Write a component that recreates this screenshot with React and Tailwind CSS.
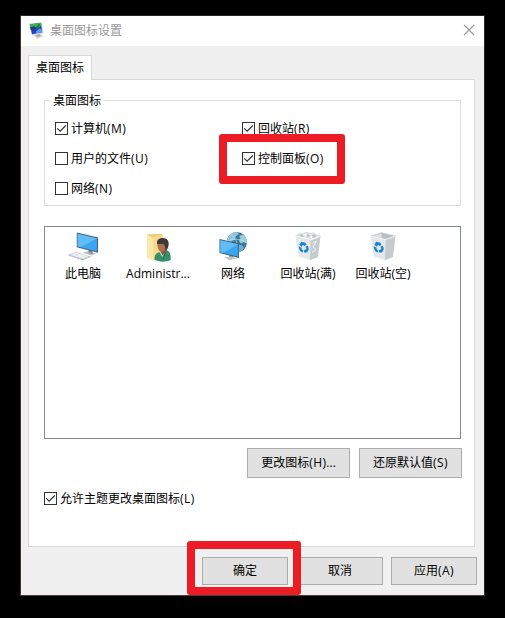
import React from 'react';

function AppIcon() {
  return (
    <svg width="16" height="18" viewBox="0 0 16 18" className="shrink-0">
      <path d="M4.5 13.2 11 12.2 14.5 14.2 8 16.8Z" fill="#cfd1d2" />
      <path d="M7 12.5 11 12 11.5 14.2 8 14.8Z" fill="#a4a8ab" />
      <path d="M.2 1.6 13 .2 14.6 11.2 3 13.4Z" fill="#d3d7da" />
      <path d="M.8 2.2 12 1 13.2 10.2 3 12.2Z" fill="#2540c4" />
      <path d="M.8 2.2 12 1 12.3 3.4 8 6.4 5.5 4.6 1.2 5.4Z" fill="#35bb4c" />
      <path d="M1.1 5 5.5 4.4 7 6 4.6 8.6 1.8 8Z" fill="#28358f" />
      <path d="M6.8 9.4 10.6 6.6 12.8 7.4 13.2 10.2 7.4 11.3Z" fill="#5ea1f0" />
      <path d="M9.8 1.8 11.4 2.8 7.8 7 6.4 5.8Z" fill="#128a2a" />
      <path d="M3.5 3.2 5.6 3.4 4.6 4.6Z" fill="#d9533d" />
    </svg>
  );
}

function ThisPcIcon() {
  return (
    <svg width="32" height="32" viewBox="0 0 32 32">
      <path d="M1 24.4 9 21.6 23.5 26.4 15.5 29.8Z" fill="#d3d7da" />
      <path d="M1 24.4 15.5 29.2 23.5 26V27L15.5 30.3 1 25.2Z" fill="#a9aeb2" />
      <path d="M4 23.6 18.5 28.3M6.5 22.6 21 27.3M5.5 26 11.5 22.7M9 27.2 15 23.9M12.5 28.4 18.5 25.1" stroke="#fff" strokeWidth=".7" />
      <path d="M15.5 22.5 21.5 21.3 29.3 23.7 24 25.4Z" fill="#b9bec1" />
      <path d="M21.5 19.5 25.5 20.5V24L21.5 22.8Z" fill="#858d92" />
      <path d="M9.8 2.6 31 7.6V22.8L9.8 17.2Z" fill="#47606f" />
      <path d="M10.7 3.8 30 8.4V21.5L10.7 16.4Z" fill="#3ba7f2" />
      <path d="M10.7 3.8 30 8.4 13.5 17.1 10.7 16.4Z" fill="#60bdf8" />
    </svg>
  );
}

function UserFolderIcon() {
  return (
    <svg width="32" height="32" viewBox="0 0 32 32">
      <path d="M5 4.3 20.5 4V27L5 28Z" fill="#e9cb74" />
      <path d="M11 6.5 20.5 5V27L11 30Z" fill="#f6da8b" />
      <path d="M5 4.3 11.3 7.8V30.5L5 27.3Z" fill="#fde8a8" />
      <path d="M12.6 29.8C12.3 24.8 14 23 18 22L24.5 20.3C28 21.5 28.8 24 28.7 30C24 32.2 17 32.2 12.6 29.8Z" fill="#35906a" />
      <path d="M17.4 21.8 20.2 27 23 21.5Z" fill="#dfece5" />
      <path d="M18.5 19.5 24.3 17 24.8 21 20.6 25.5 18.5 22Z" fill="#8f5b3c" />
      <path d="M15.4 13.5C15.4 11 17 10 20.5 10.5L24 13.5C24 18.5 22.5 21.8 20 22 17 22 15.5 18.2 15.4 13.5Z" fill="#aa7049" />
      <path d="M15.2 14.3C14.2 10.2 17 8 20.6 8 25 8 27.3 10.8 26.6 15 26.2 18 25 20 23.7 20.5L23 16.3 22 14C19.5 14 17 13 15.2 14.3Z" fill="#3c3938" />
      <path d="M24 21.4 21 29.5" stroke="#216b49" strokeWidth=".8" />
    </svg>
  );
}

function NetworkIcon() {
  return (
    <svg width="32" height="32" viewBox="0 0 32 32">
      <circle cx="19.8" cy="12.3" r="10.2" fill="#3c7899" />
      <path d="M10.5 9C12 4.5 16 2.1 20 2.1L22 4 19 6 17.8 9.5 13.5 12 10 11Z" fill="#91c6d9" />
      <path d="M22 6 26 4.5C29 7 30.5 10 29.9 13.5L26.5 12 24 13.5 22 11 23.5 8.5Z" fill="#9dcddd" />
      <path d="M21 14.5 25.5 15.5 27 18C25 21 23 22 20.5 22.4Z" fill="#75adc6" />
      <path d="M13 4.5C19 7 22 15 20.5 22M10 11C17 8 25 9 29.8 13" stroke="#b9e0ec" strokeWidth=".7" fill="none" />
      <path d="M12 25.5 16 25V28.5H12Z" fill="#899196" />
      <path d="M7.5 27.5 14 26.6 20 28.2 12.5 30.2Z" fill="#bfc4c7" />
      <path d="M2.5 9 22 13.4V28L2.5 23Z" fill="#3e5b6c" />
      <path d="M3.4 10.2 21.2 14.2V26.8L3.4 22.3Z" fill="#38a5f0" />
      <path d="M3.4 10.2 21.2 14.2 6 23 3.4 22.3Z" fill="#60bdf8" />
    </svg>
  );
}

function BinIcon({ full }) {
  return (
    <svg width="32" height="32" viewBox="0 0 32 32">
      <path d="M3.5 6 18.5 9.5 18 30.3 7 26.5Z" fill="#e5e8ea" />
      <path d="M18.5 9.5 28.5 6 26 27 18 30.3Z" fill="#c6cbce" />
      <path d="M3.5 6 14.5 2.5 28.5 6 18.5 9.5Z" fill="#b9bfc2" />
      <path d="M5.8 6 14.5 3.4V8.2Z" fill="#dfe3e5" />
      {full && (
        <g>
          <path d="M3.5 6 8 2.5 11 4 14 1.5 18 3 22 2 24 4.5 28.5 6 25 8.5 18.5 10.5 12 9Z" fill="#e4e6e7" />
          <path d="M7 5.5 10 3.8 12 6.5 9.5 7ZM15 3.5 18 5.5 15.5 8ZM20 5 23 4 24.5 7 20.5 8Z" fill="#bcc2c5" />
          <path d="M11 4.5 14 3 14.5 6ZM18 7 20 5.5 20.5 8.5Z" fill="#fff" />
          <path d="M20.5 13 24.5 11 21 17 24 19.5 20 22.5M8 12 11 14.5M10 24 15 27" stroke="#f1f3f4" strokeWidth="1" fill="none" />
        </g>
      )}
      <path d="M3.5 6 18.5 9.5 28.5 6" fill="none" stroke="#f7f8f8" strokeWidth=".9" />
      <path d="M3.5 6 14.5 2.5 28.5 6" fill="none" stroke="#d2d6d8" strokeWidth=".6" />
      <g fill="#1583d3">
        <path d="M7.4 14.8 9.2 11.8 13.3 12.8 14.6 14.8 12.4 16 11 14.8 9.8 16.8Z" />
        <path d="M13.4 16.8 15.9 15.7 16.8 19 15.2 22.2 12.8 22.8 11.5 20.7 13.2 19.4 14.2 19.6 14.3 18.2Z" />
        <path d="M6.6 16.3 10.2 18 9.2 18.8 11 20.4 11 22.6 8.6 21.6 7 18.4Z" />
      </g>
    </svg>
  );
}

function Mnemonic({ children }) {
  return <span className="tracking-[0.4px]">({children})</span>;
}

function CheckBox({ checked, children, className = '' }) {
  return (
    <label className={`flex h-[13px] items-center ${className}`}>
      <span className="flex h-[13px] w-[13px] shrink-0 items-center justify-center border border-[#333] bg-white">
        {checked && (
          <svg width="11" height="11" viewBox="0 0 11 11" fill="none">
            <path d="M1.3 5.4 4.1 8.2 9.8 2.5" stroke="#333" strokeWidth="1.2" />
          </svg>
        )}
      </span>
      <span className="ml-[3px] whitespace-nowrap leading-[13px]">{children}</span>
    </label>
  );
}

function Button({ className, children }) {
  return (
    <button className={`flex items-center justify-center whitespace-nowrap border border-[#adadad] bg-[#e1e1e1] ${className}`}>
      <span>{children}</span>
    </button>
  );
}

function Item({ icon, label }) {
  return (
    <div className="flex w-[75px] flex-col items-center">
      {icon}
      <span className="mt-1 whitespace-nowrap leading-4">{label}</span>
    </div>
  );
}

export default function App() {
  return (
    <div className="relative h-[618px] w-[505px] overflow-hidden bg-black pl-5 pt-[15px] font-['Open_Sans','Noto_Sans_CJK_SC',sans-serif] text-[12px] text-black">
      <div className="flex h-[581px] w-[465px] flex-col border border-[#282828] border-b-[#4b3b3d] border-l-[#47351f] bg-[#f0f0f0]">
        <header className="flex h-[30px] shrink-0 items-center bg-white pl-2 pr-[9px] text-[#999]">
          <AppIcon />
          <span className="ml-[5px] flex-1">桌面图标设置</span>
          <svg width="12" height="12" viewBox="0 0 12 12" stroke="#999" strokeWidth="1.1" className="-mt-0.5">
            <path d="M1 1 11 11M11 1 1 11" />
          </svg>
        </header>

        <div className="mt-[9px] px-[7px]">
          <div className="relative z-10 -mb-px flex h-[25px] w-16 items-center justify-center border border-b-0 border-[#d9d9d9] bg-white">
            桌面图标
          </div>
          <main className="flex h-[468px] w-[447px] flex-col border border-[#d9d9d9] bg-white pl-[15px] pt-5">
            <section className="flex h-[106px] w-[417px] flex-col border border-[#dcdcdc]">
              <h2 className="-mt-2 ml-[5px] h-4 w-[54px] bg-white pl-[3px] leading-4">桌面图标</h2>
              <div className="ml-2.5 mt-[13px] grid grid-cols-[187px_1fr] gap-y-[17px]">
                <CheckBox checked>计算机<Mnemonic>M</Mnemonic></CheckBox>
                <CheckBox checked>回收站<Mnemonic>R</Mnemonic></CheckBox>
                <CheckBox>用户的文件<Mnemonic>U</Mnemonic></CheckBox>
                <CheckBox checked>控制面板<Mnemonic>O</Mnemonic></CheckBox>
                <CheckBox>网络<Mnemonic>N</Mnemonic></CheckBox>
              </div>
            </section>
            <section className="mt-5 flex h-[213px] w-[417px] shrink-0 border border-[#828790] pl-[0.5px] pt-[3px]">
              <Item icon={<ThisPcIcon />} label="此电脑" />
              <Item icon={<UserFolderIcon />} label="Administr..." />
              <Item icon={<NetworkIcon />} label="网络" />
              <Item icon={<BinIcon full />} label="回收站(满)" />
              <Item icon={<BinIcon />} label="回收站(空)" />
            </section>
            <div className="ml-[203px] mt-[9px] flex gap-[9px]">
              <Button className="h-[30px] w-[103px]">更改图标<Mnemonic>H</Mnemonic>...</Button>
              <Button className="h-[30px] w-[103px]">还原默认值<Mnemonic>S</Mnemonic></Button>
            </div>
            <CheckBox checked className="mt-3.5">允许主题更改桌面图标<Mnemonic>L</Mnemonic></CheckBox>
          </main>
        </div>
        <footer className="mt-2.5 flex justify-end gap-2 pr-[7px]">
          <Button className="mr-px h-7 w-[86px]">确定</Button>
          <Button className="h-7 w-[86px]">取消</Button>
          <Button className="h-7 w-[86px]">应用<Mnemonic>A</Mnemonic></Button>
        </footer>
      </div>
      <div className="absolute left-[219px] top-[134px] z-20 h-[50px] w-[126px] rounded-[3px] border-8 border-[#ed1c24]" />
      <div className="absolute left-[187px] top-[541px] z-20 h-[54px] w-[114px] rounded-[3px] border-8 border-[#ed1c24]" />
    </div>
  );
}
